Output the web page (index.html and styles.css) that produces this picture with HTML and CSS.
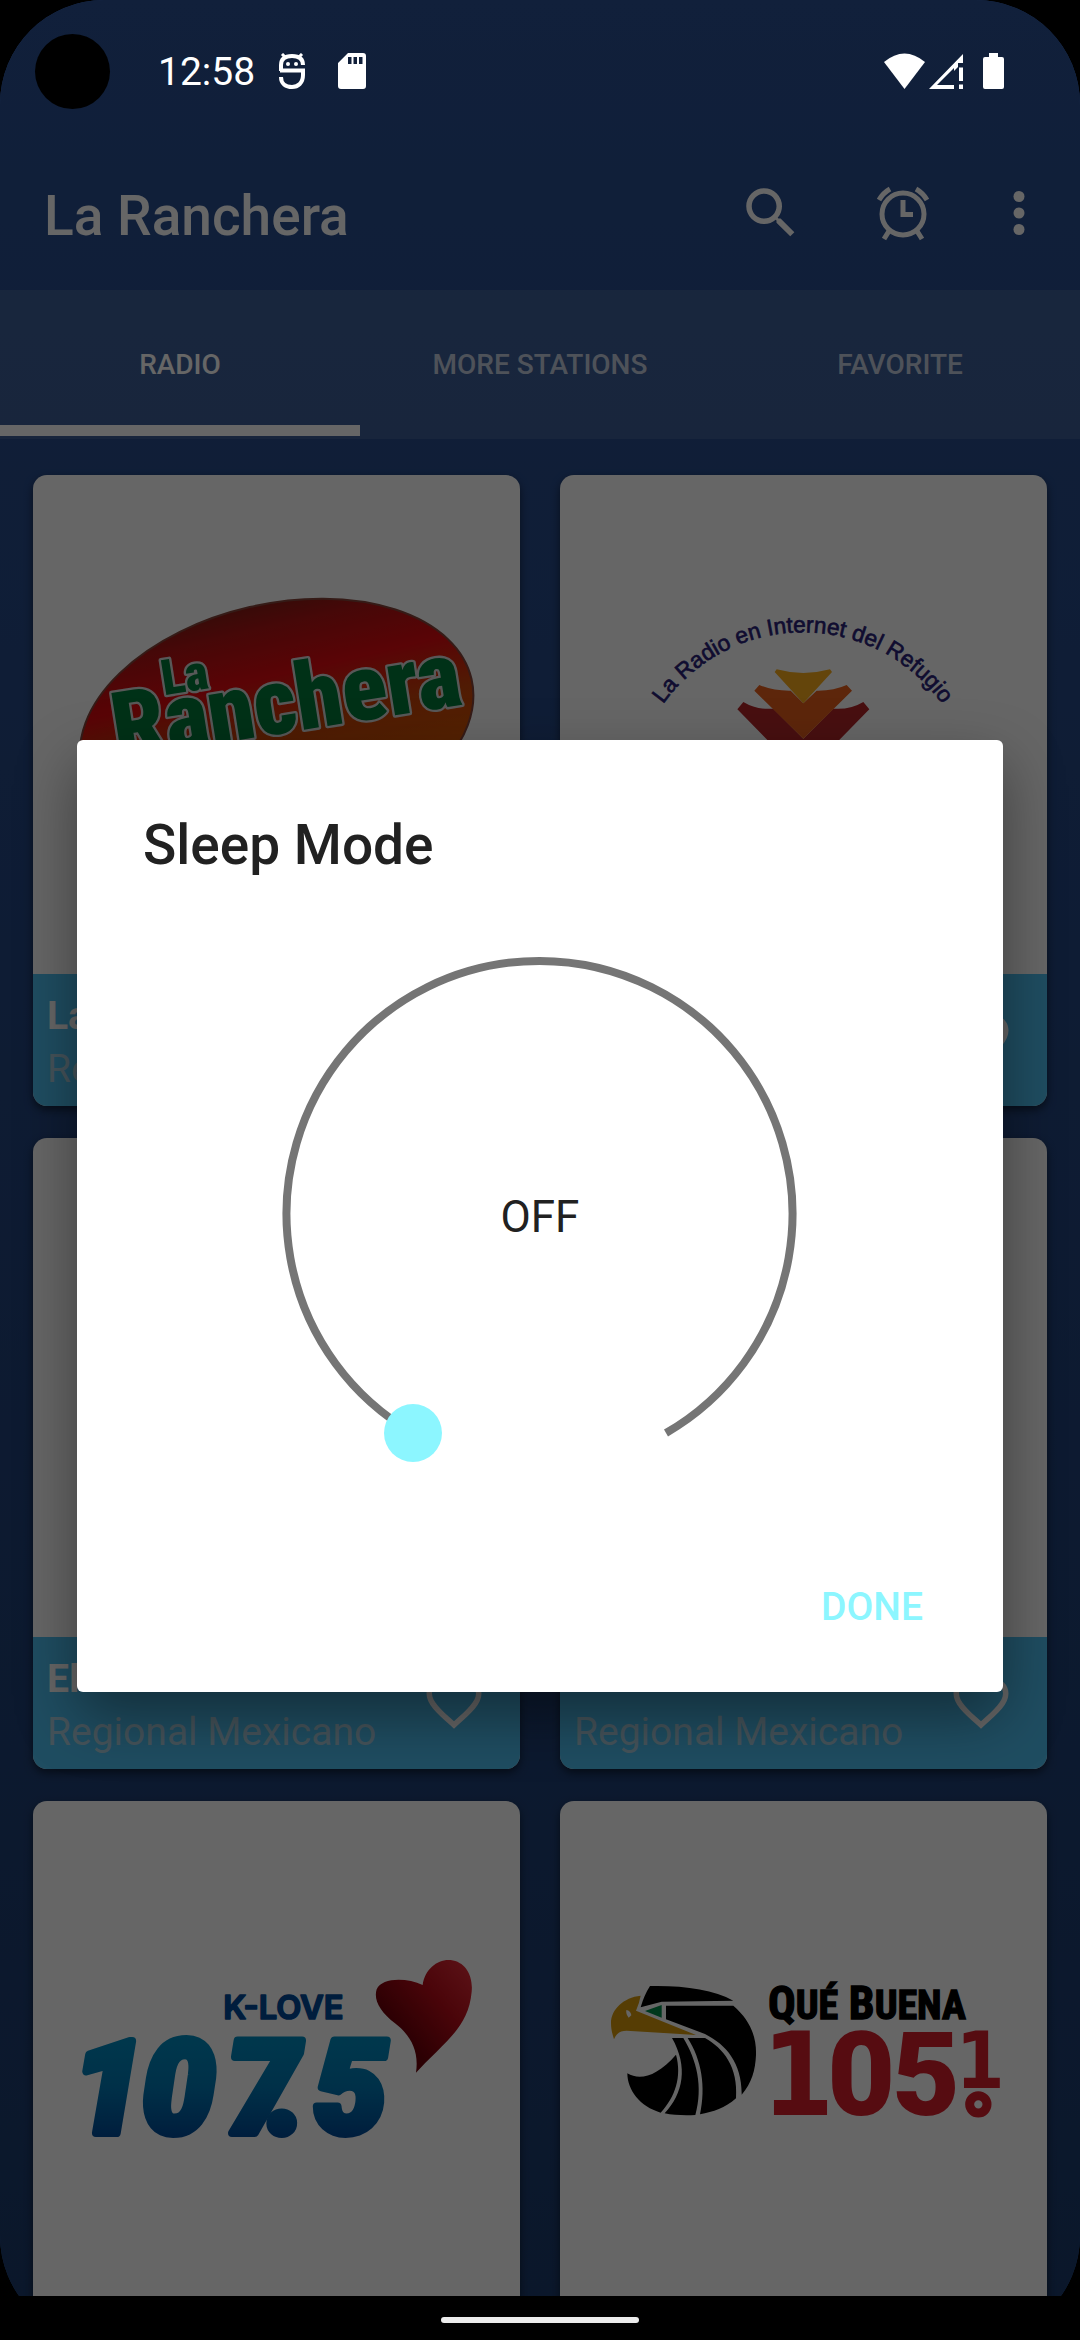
FILE: index.html
```html
<!DOCTYPE html>
<html lang="es">
  <head>
    <meta charset="UTF-8" />
    <meta name="viewport" content="width=device-width, initial-scale=1.0" />
    <title>La Ranchera</title>
    <link rel="stylesheet" href="styles.css">
  </head>
  <body>
    <div class="screen">
      <!-- status bar, stays above the scrim -->
      <div class="status-bar">
        <span class="camera"></span>
        <span class="clock">12:58</span>
        <svg class="status-debug" viewBox="0 0 26 36" aria-hidden="true">
          <g fill="none" stroke="#fff" stroke-width="4">
            <path d="M2 18V12C2 5 7 3 13 3s11 2 11 9" />
            <path d="M1 17.500H24V22c0 8-5 12-11 12S2 31 2 24" />
            <path d="M3 1l4 4M23 1l-4 4" stroke-width="3" />
          </g>
          <circle cx="9" cy="11" r="2" fill="#fff" />
          <circle cx="17" cy="11" r="2" fill="#fff" />
        </svg>
        <svg class="status-sd" viewBox="0 0 28 36" aria-hidden="true">
          <path fill="#fff" fill-rule="evenodd" d="M10 0H25a3 3 0 0 1 3 3V33a3 3 0 0 1-3 3H3a3 3 0 0 1-3-3V10zM10 4v7h3.500V4zM15.500 4v7H19V4zM21 4v7h3.500V4z" />
        </svg>
        <span class="status-right">
          <svg class="status-wifi" viewBox="0 0 41 36" aria-hidden="true">
            <path fill="#fff" d="M0 9Q20.500-8 41 9L20.500 36z" />
          </svg>
          <svg class="status-signal" viewBox="0 0 34 36" aria-hidden="true">
            <path fill="#fff" d="M34 1V10H29V14L25 18V15L8 32H25V36H0zM30 14.500h4V28h-4zM30 31.500h4V36h-4z" />
          </svg>
          <svg class="status-battery" viewBox="0 0 21 36" aria-hidden="true">
            <path fill="#fff" d="M6 0h9v4h4a2 2 0 0 1 2 2V34a2 2 0 0 1-2 2H2a2 2 0 0 1-2-2V6a2 2 0 0 1 2-2h4z" />
          </svg>
        </span>
      </div>

      <!-- the app itself -->
      <div class="app">
        <header class="toolbar">
          <h1 class="toolbar-title">La Ranchera</h1>
          <button class="icon-btn search-btn" aria-label="Search">
            <svg viewBox="0 0 24 24" aria-hidden="true">
              <path d="M15.500 14h-.79l-.28-.27A6.470 6.470 0 0 0 16 9.500 6.500 6.500 0 1 0 9.500 16c1.610 0 3.090-.59 4.230-1.570l.27.28v.79l5 4.990L20.490 19l-4.990-5zm-6 0C7.010 14 5 11.990 5 9.500S7.010 5 9.500 5 14 7.010 14 9.500 11.990 14 9.500 14z" />
            </svg>
          </button>
          <button class="icon-btn alarm-btn" aria-label="Sleep mode">
            <svg viewBox="0 0 66 66" aria-hidden="true">
              <g fill="none" stroke="#fff">
                <circle cx="33" cy="34" r="21" stroke-width="5" />
                <path d="M33 20V34.500H43" stroke-width="5" />
                <path d="M20 9Q13 13 9 20M46 9Q53 13 57 20" stroke-width="5" />
                <path d="M19 51l-5 8M47 51l5 8" stroke-width="5" />
              </g>
            </svg>
          </button>
          <button class="icon-btn more-btn" aria-label="More options">
            <svg viewBox="0 0 24 24" aria-hidden="true">
              <circle cx="12" cy="6" r="2" />
              <circle cx="12" cy="12" r="2" />
              <circle cx="12" cy="18" r="2" />
            </svg>
          </button>
        </header>

        <nav class="tabs">
          <button class="tab active">RADIO</button>
          <button class="tab">MORE STATIONS</button>
          <button class="tab">FAVORITE</button>
        </nav>

        <!-- station cards -->
        <main class="stations">
          <article class="card">
            <svg class="cover" viewBox="-81 -255 1461 1497" role="img" aria-label="La Ranchera">
              <defs>
                <linearGradient id="ovalShade" x1="0" y1="0" x2="0" y2="1">
                  <stop offset="0" stop-color="#8c1c14" />
                  <stop offset="0.100" stop-color="#b01414" />
                  <stop offset="0.300" stop-color="#e00a10" />
                  <stop offset="0.520" stop-color="#c8440a" />
                  <stop offset="1" stop-color="#e06a00" />
                </linearGradient>
              </defs>
              <ellipse cx="650" cy="492" rx="600" ry="360" transform="rotate(-13 650 492)" fill="url(#ovalShade)" stroke="#84443a" stroke-width="6" />
              <g class="ranchera-text">
                <text x="312" y="406" font-size="148" transform="rotate(-9 312 406)">La</text>
                <text x="172" y="598" font-size="280" transform="rotate(-9 172 598)">Ranchera</text>
              </g>
            </svg>
            <div class="card-info">
              <div class="card-text">
                <h2 class="card-title">La Ranchera</h2>
                <p class="card-genre">Regional Mexicano</p>
              </div>
              <button class="fav-btn" aria-label="Add La Ranchera to favorites">
                <svg viewBox="0 0 24 24" aria-hidden="true"><path d="M16.500 3c-1.740 0-3.410.81-4.500 2.090C10.910 3.810 9.240 3 7.500 3 4.420 3 2 5.420 2 8.500c0 3.780 3.400 6.860 8.550 11.540L12 21.350l1.450-1.320C18.600 15.360 22 12.280 22 8.500 22 5.420 19.580 3 16.500 3zm-4.400 15.550l-.1.1-.1-.1C7.140 14.240 4 11.390 4 8.500 4 6.500 5.500 5 7.500 5c1.540 0 3.040.99 3.570 2.360h1.870C13.460 5.990 14.960 5 16.500 5c2 0 3.500 1.500 3.500 3.500 0 2.890-3.140 5.740-7.900 10.050z" /></svg>
              </button>
            </div>
          </article>

          <article class="card">
            <svg class="cover" viewBox="-120 -315 1461 1497" role="img" aria-label="La Radio en Internet del Refugio">
              <path id="arc" d="M94 671A514 514 0 0 1 1122 671" fill="none" />
              <text class="refugio-text" font-size="68" text-anchor="middle">
                <textPath href="#arc" startOffset="50%">La Radio en Internet del Refugio</textPath>
              </text>
              <path fill="#b5262a" d="M430 366L412 388L610 590L808 388L790 366Q750 390 700 386L610 476L520 386Q470 390 430 366z" />
              <path fill="#e8601c" d="M478 315L463 332L610 476L756 332L740 315Q700 333 650 332L610 370L572 332Q520 333 478 315z" />
              <path fill="#f9ad1c" d="M530 268L524 276L610 370L696 276L690 268Q610 290 530 268z" />
            </svg>
            <div class="card-info">
              <div class="card-text">
                <h2 class="card-title">El Refugio</h2>
                <p class="card-genre">Regional Mexicano</p>
              </div>
              <button class="fav-btn" aria-label="Add El Refugio to favorites">
                <svg viewBox="0 0 24 24" aria-hidden="true"><path d="M16.500 3c-1.740 0-3.410.81-4.500 2.090C10.910 3.810 9.240 3 7.500 3 4.420 3 2 5.420 2 8.500c0 3.780 3.400 6.860 8.550 11.540L12 21.350l1.450-1.320C18.600 15.360 22 12.280 22 8.500 22 5.420 19.580 3 16.500 3zm-4.400 15.550l-.1.1-.1-.1C7.140 14.240 4 11.390 4 8.500 4 6.500 5.500 5 7.500 5c1.540 0 3.040.99 3.570 2.360h1.870C13.460 5.990 14.960 5 16.500 5c2 0 3.500 1.500 3.500 3.500 0 2.890-3.140 5.740-7.900 10.050z" /></svg>
              </button>
            </div>
          </article>

          <article class="card">
            <svg class="cover" viewBox="0 0 1461 1497" aria-hidden="true"></svg>
            <div class="card-info">
              <div class="card-text">
                <h2 class="card-title">El</h2>
                <p class="card-genre">Regional Mexicano</p>
              </div>
              <button class="fav-btn" aria-label="Add to favorites">
                <svg viewBox="0 0 24 24" aria-hidden="true"><path d="M16.500 3c-1.740 0-3.410.81-4.500 2.090C10.910 3.810 9.240 3 7.500 3 4.420 3 2 5.420 2 8.500c0 3.780 3.400 6.860 8.550 11.540L12 21.350l1.450-1.320C18.600 15.360 22 12.280 22 8.500 22 5.420 19.580 3 16.500 3zm-4.400 15.550l-.1.1-.1-.1C7.140 14.240 4 11.390 4 8.500 4 6.500 5.500 5 7.500 5c1.540 0 3.040.99 3.570 2.360h1.870C13.460 5.990 14.960 5 16.500 5c2 0 3.500 1.500 3.500 3.500 0 2.890-3.140 5.740-7.900 10.050z" /></svg>
              </button>
            </div>
          </article>

          <article class="card">
            <svg class="cover" viewBox="0 0 1461 1497" aria-hidden="true"></svg>
            <div class="card-info">
              <div class="card-text">
                <h2 class="card-title">La</h2>
                <p class="card-genre">Regional Mexicano</p>
              </div>
              <button class="fav-btn" aria-label="Add to favorites">
                <svg viewBox="0 0 24 24" aria-hidden="true"><path d="M16.500 3c-1.740 0-3.410.81-4.500 2.090C10.910 3.810 9.240 3 7.500 3 4.420 3 2 5.420 2 8.500c0 3.780 3.400 6.860 8.550 11.540L12 21.350l1.450-1.320C18.600 15.360 22 12.280 22 8.500 22 5.420 19.580 3 16.500 3zm-4.400 15.550l-.1.1-.1-.1C7.140 14.240 4 11.390 4 8.500 4 6.500 5.500 5 7.500 5c1.540 0 3.040.99 3.570 2.360h1.870C13.460 5.990 14.960 5 16.500 5c2 0 3.500 1.500 3.500 3.500 0 2.890-3.140 5.740-7.900 10.050z" /></svg>
              </button>
            </div>
          </article>

          <article class="card">
            <svg class="cover" viewBox="-81 -417 1461 1497" role="img" aria-label="K-Love 107.5">
              <defs>
                <linearGradient id="klove" gradientUnits="userSpaceOnUse" x1="0" y1="290" x2="0" y2="595">
                  <stop offset="0" stop-color="#008cc0" />
                  <stop offset="0.500" stop-color="#0078b4" />
                  <stop offset="1" stop-color="#004a98" />
                </linearGradient>
                <linearGradient id="heart" x1="1" y1="0" x2="0.300" y2="0.700">
                  <stop offset="0" stop-color="#e8303c" />
                  <stop offset="0.500" stop-color="#b80c18" />
                  <stop offset="1" stop-color="#6c0008" />
                </linearGradient>
              </defs>
              <text class="klove-name" x="490" y="236" font-size="98">K-LOVE</text>
              <text class="klove-number" x="36 246 498 624 762" y="579" font-size="388">107.5</text>
              <path fill="url(#heart)" d="M1068 398C1078 330 1050 285 1005 250C960 215 940 180 950 148C965 112 1040 112 1088 135C1095 85 1135 56 1172 60C1215 65 1240 105 1235 155C1228 240 1180 285 1130 335Q1095 368 1068 398z" />
            </svg>
            <div class="card-info"></div>
          </article>

          <article class="card">
            <svg class="cover" viewBox="-90 -477 1461 1497" role="img" aria-label="Qué Buena 105.1">
              <path d="M180 78C280 76 370 88 430 122L215 125L152 142Q162 106 180 78z" />
              <path d="M228 137H430C480 180 500 230 498 285C496 330 485 370 455 404C456 310 410 255 345 222L228 178z" />
              <path fill="#008c4a" d="M165 153L215 135V173z" />
              <path fill="#d79a0c" d="M152 107C100 112 62 150 63 190C63 210 68 225 72 238C80 220 90 212 110 212L318 225L138 152Q148 130 152 107z" />
              <path fill="#fff" d="M109 150Q122 152 124 166L116 173Q107 162 109 150z" />
              <path d="M112 340C150 362 200 350 258 284C276 350 256 410 212 458C150 440 112 390 112 340z" />
              <path d="M246 234H280C320 300 340 380 316 465C290 467 250 466 224 460C280 400 295 320 246 234z" />
              <path d="M293 234H345C400 265 445 320 438 415C405 445 370 455 330 463C348 380 335 300 293 234z" />
              <text class="buena-name" x="534" y="178" font-size="138">Q<tspan font-size="120">UÉ</tspan> B<tspan font-size="120">UENA</tspan></text>
              <text class="buena-one" x="515" y="466" font-size="347">1</text>
              <text class="buena-number" x="712 906" y="464" font-size="352">05</text>
              <text class="buena-one" x="1097" y="384" font-size="234">1</text>
              <circle cx="1165" cy="433" r="26" fill="none" stroke="#d81e2c" stroke-width="27" />
            </svg>
            <div class="card-info"></div>
          </article>
        </main>
      </div>

      <!-- sleep mode dialog -->
      <div class="scrim">
        <section class="dialog" role="dialog" aria-labelledby="sleepTitle">
          <h2 class="dialog-title" id="sleepTitle">Sleep Mode</h2>
          <div class="dial">
            <svg viewBox="0 0 572 572" aria-hidden="true">
              <path d="M159 505A253 253 0 1 1 412 505" fill="none" stroke="#757575" stroke-width="8" />
              <circle cx="159" cy="505" r="29" fill="#8cf6ff" />
            </svg>
            <label class="dial-value" for="sleepTime">OFF</label>
            <input class="dial-input" id="sleepTime" type="range" min="0" max="120" value="0" />
          </div>
          <div class="dialog-actions">
            <button class="done-btn">DONE</button>
          </div>
        </section>
      </div>

      <div class="nav-bar"><span class="nav-handle"></span></div>
    </div>
  </body>
</html>
```
FILE: styles.css
```css
/* reset */
* {
  margin: 0;
  padding: 0;
  box-sizing: border-box;
}
body {
  background-color: #000;
  font-family: Roboto, "Open Sans", sans-serif;
}
button {
  border: none;
  background: none;
  font-family: inherit;
  cursor: pointer;
}
svg {
  display: block;
}
/* rounded phone screen */
.screen {
  position: relative;
  display: flex;
  flex-direction: column;
  height: 100vh;
  border-radius: 104px;
  overflow: hidden;
}
/* status bar */
.status-bar {
  position: absolute;
  top: 0;
  left: 0;
  right: 0;
  z-index: 3;
  display: flex;
  align-items: center;
  height: 142px;
  padding: 0 76px 0 35px;
}
.camera {
  width: 75px;
  height: 75px;
  border-radius: 50%;
  background-color: #000;
}
.clock {
  margin-left: 48px;
  padding-top: 2px;
  font-size: 39px;
  line-height: 46px;
  color: #fff;
}
.status-debug {
  width: 26px;
  height: 36px;
  margin-left: 24px;
}
.status-sd {
  width: 28px;
  height: 36px;
  margin-left: 33px;
}
.status-right {
  display: flex;
  margin-left: auto;
}
.status-wifi {
  width: 41px;
  height: 36px;
}
.status-signal {
  width: 34px;
  height: 36px;
  margin-left: 4px;
}
.status-battery {
  width: 21px;
  height: 36px;
  margin-left: 20px;
}
/* app */
.app {
  flex: 1;
  min-height: 0;
  padding-top: 136px;
  background: linear-gradient(#2b5093, #1c3b6c);
  overflow: hidden;
}
.toolbar {
  display: flex;
  align-items: center;
  height: 154px;
  padding: 0 28px 0 44px;
}
.toolbar-title {
  flex: 1;
  padding-top: 6px;
  font-size: 55px;
  line-height: 64px;
  font-weight: 500;
  color: #fff;
}
.icon-btn svg {
  width: 66px;
  height: 66px;
  fill: #fff;
}
.alarm-btn {
  margin-left: 66px;
}
.more-btn {
  margin-left: 50px;
}
/* tabs */
.tabs {
  display: grid;
  grid-template-columns: repeat(3, 1fr);
  height: 149px;
  padding-bottom: 3px;
  background-color: rgba(255, 255, 255, 0.1);
}
.tab {
  padding-top: 2px;
  border-top: 11px solid transparent;
  border-bottom: 11px solid transparent;
  font-size: 28px;
  font-weight: 500;
  color: rgba(255, 255, 255, 0.7);
}
.tab.active {
  border-bottom-color: #fff;
  color: #fff;
}
/* station grid */
.stations {
  display: grid;
  grid-template-columns: 1fr 1fr;
  gap: 32px 40px;
  padding: 36px 33px;
}
.card {
  border-radius: 14px;
  background-color: #fff;
  box-shadow: 0 4px 8px rgba(0, 0, 0, 0.5);
  overflow: hidden;
}
.cover {
  width: 100%;
}
.card-info {
  display: flex;
  align-items: center;
  height: 132px;
  padding: 0 33px 0 14px;
  background-color: #4fc0f2;
}
.card-text {
  flex: 1;
  padding-top: 6px;
}
.card-title {
  font-size: 39px;
  line-height: 53px;
  font-weight: 700;
  color: #fff;
}
.card-genre {
  font-size: 39px;
  line-height: 53px;
  color: #acd0e0;
}
.fav-btn svg {
  width: 66px;
  height: 66px;
  fill: #fff;
}
/* station logos */
.ranchera-text {
  font-family: "Liberation Sans Narrow", "Roboto Condensed", Roboto, sans-serif;
  font-weight: 900;
  fill: #007a3a;
  stroke: #ddd;
  stroke-width: 14px;
  stroke-linejoin: round;
  paint-order: stroke;
}
.refugio-text {
  font-family: "Liberation Sans", Arial, sans-serif;
  fill: #281e78;
  stroke: #281e78;
  stroke-width: 2px;
}
.klove-name {
  font-family: Inter, sans-serif;
  font-weight: 600;
  fill: #004a98;
  stroke: #004a98;
  stroke-width: 5px;
  stroke-linejoin: round;
}
.klove-number {
  font-family: Roboto, sans-serif;
  font-weight: 900;
  font-style: italic;
  fill: url(#klove);
  stroke: url(#klove);
  stroke-width: 24px;
  stroke-linejoin: round;
}
.buena-name {
  font-family: "Liberation Sans Narrow", "Roboto Condensed", Roboto, sans-serif;
  font-weight: 700;
  stroke: #000;
  stroke-width: 4px;
}
.buena-number {
  font-family: Roboto, sans-serif;
  font-weight: 900;
  fill: #d81e2c;
}
.buena-one {
  font-family: "DejaVu Sans Condensed", "DejaVu Sans", sans-serif;
  font-weight: 700;
  fill: #d81e2c;
}
/* dimmed layer and dialog */
.scrim {
  position: absolute;
  inset: 0;
  z-index: 2;
  display: flex;
  align-items: center;
  padding: 136px 77px 44px;
  background-color: rgba(0, 0, 0, 0.6);
}
.dialog {
  flex: 1;
  border-radius: 6px;
  background-color: #fff;
  box-shadow: 0 24px 60px rgba(0, 0, 0, 0.4);
}
.dialog-title {
  padding: 72px 66px 0;
  font-size: 55px;
  line-height: 66px;
  font-weight: 500;
  color: #212121;
}
.dial {
  position: relative;
  width: 572px;
  margin: 50px auto 0;
}
.dial-value {
  position: absolute;
  inset: 0;
  display: flex;
  align-items: center;
  justify-content: center;
  padding-top: 6px;
  font-size: 44px;
  color: #212121;
}
/* real slider sits over the drawn arc */
.dial-input {
  position: absolute;
  inset: 0;
  width: 100%;
  height: 100%;
  opacity: 0;
}
.dialog-actions {
  display: flex;
  justify-content: flex-end;
  padding: 56px 58px 36px;
}
.done-btn {
  height: 100px;
  padding: 2px 22px 0;
  font-size: 39px;
  font-weight: 500;
  color: #8cf6ff;
}
/* gesture bar */
.nav-bar {
  z-index: 3;
  display: flex;
  align-items: center;
  justify-content: center;
  height: 44px;
  padding-top: 4px;
  background-color: #000;
}
.nav-handle {
  width: 198px;
  height: 6px;
  border-radius: 3px;
  background-color: #ececec;
}
```
